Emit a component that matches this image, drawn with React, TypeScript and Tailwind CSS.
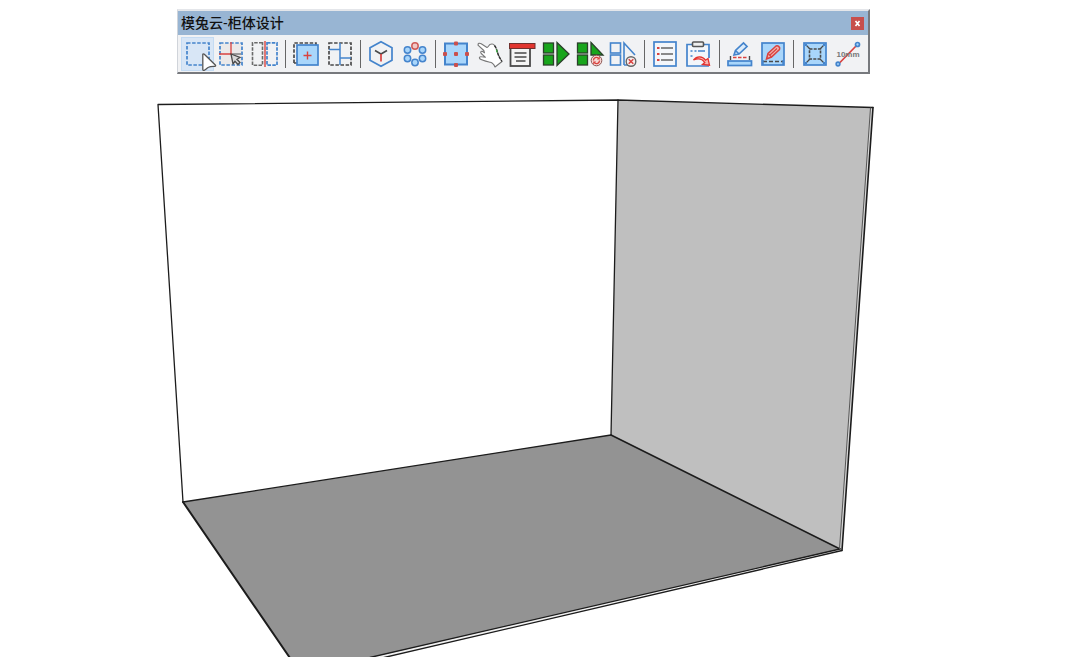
import type { ReactNode } from "react";
import clsx from "clsx";

const BLUE = "#4484cc";
const SKY = "#a9d6fb";
const RED = "#d9423f";
const DARK = "#4a4a4a";
const GREEN = "#18a51c";

type Tool = { label: string; icon: ReactNode; active?: boolean };

const Icon = ({ children }: { children: ReactNode }) => (
  <svg
    viewBox="0 0 24 24"
    className="size-6 overflow-visible"
    fill="none"
    strokeWidth="1.7"
    aria-hidden="true"
  >
    {children}
  </svg>
);

const groups: Tool[][] = [
  [
    {
      label: "选择空间",
      active: true,
      icon: (
        <Icon>
          <rect x="1" y="1" width="22" height="22" stroke={BLUE} strokeDasharray="3.5 1.6" />
        </Icon>
      ),
    },
    {
      label: "拾取分割",
      icon: (
        <Icon>
          <rect x="1" y="1" width="22" height="22" fill="#ebe9e9" stroke={BLUE} strokeDasharray="3.5 1.6" />
          <path d="M12 0v13M0 12h13" stroke={RED} strokeWidth="1.3" />
          <path d="M13 12h9" stroke={DARK} strokeWidth="1" />
          <path d="M12 12l9 3.5-3 1.8 3 3.2-2 2-3-3.2-2 2.7z" fill="#d8d8d8" stroke={DARK} strokeWidth="1.3" />
        </Icon>
      ),
    },
    {
      label: "左右拆分",
      icon: (
        <Icon>
          <path d="M9.5 .8H-.5v22.4h10z" stroke="#6a6a6a" strokeWidth="1.6" strokeDasharray="3.5 1.3" />
          <path d="M14 .8h10v22.4H14z" stroke={BLUE} strokeDasharray="3.5 1.3" />
          <path d="M12-1v26" stroke="#de6a68" strokeWidth="1.8" />
        </Icon>
      ),
    },
  ],
  [
    {
      label: "添加柜体",
      icon: (
        <Icon>
          <path d="M0 21V1h22v3M0 21h3" stroke={DARK} strokeDasharray="3.5 1.6" />
          <rect x="3" y="3" width="21" height="20" fill={SKY} stroke={BLUE} />
          <path d="M13.5 9.5v8M9.5 13.5h8" stroke={RED} strokeWidth="1.4" />
        </Icon>
      ),
    },
    {
      label: "分隔布局",
      icon: (
        <Icon>
          <rect x="1" y="1" width="22" height="22" stroke={DARK} strokeDasharray="3.5 1.6" />
          <path d="M12 1v22M1 7.5h11M12 16h11" stroke={BLUE} strokeWidth="1.5" />
        </Icon>
      ),
    },
  ],
  [
    {
      label: "模型",
      icon: (
        <Icon>
          <path d="M12-.3l11 6v12.6l-11 6-11-6V5.7z" stroke={BLUE} />
          <path d="M6 8.5l6 3.5 6-3.5" stroke={DARK} strokeWidth="1.6" />
          <path d="M12 12v7.5" stroke={RED} />
        </Icon>
      ),
    },
    {
      label: "组件",
      icon: (
        <Icon>
          <g fill={SKY} stroke={BLUE} strokeWidth="1.5">
            <circle cx="4.500" cy="8" r="3.200" />
            <circle cx="19.500" cy="8" r="3.200" />
            <circle cx="4.500" cy="16.500" r="3.200" />
            <circle cx="19.500" cy="16.500" r="3.200" />
            <circle cx="12" cy="20.500" r="3.200" />
          </g>
          <circle cx="12" cy="4" r="3.200" fill="#f0c8c6" stroke="#cf5b58" strokeWidth="1.5" />
        </Icon>
      ),
    },
  ],
  [
    {
      label: "控制点",
      icon: (
        <Icon>
          <rect x="1" y="1.5" width="22" height="21" fill={SKY} stroke={BLUE} strokeWidth="2" />
          <g fill="#c9504e">
            <rect x="10" y="-.5" width="4" height="4" rx="1" />
            <rect x="10" y="21" width="4" height="4" rx="1" />
            <rect x="-1" y="10" width="4" height="4" rx="1" />
            <rect x="21" y="10" width="4" height="4" rx="1" />
            <rect x="10" y="10" width="4" height="4" rx="1" />
          </g>
        </Icon>
      ),
    },
    {
      label: "拖动",
      icon: (
        <Icon>
          <path
            d="M1 3.2C.8 1.2 2.600 .8 4.200 1.800L10 5.500C11.300 5.200 12 2.500 13.500 2.200C15 1.800 17 2.300 17.500 3.500C19.500 6 20 9 21 12C22 15 23.500 17 25 19.500L18 25C17 22.500 15.500 20.800 13.300 20.300C10 19.500 5 18.500 2.800 16.800C1.700 15.500 3 14.500 4.500 14.800L8.500 15.300L4.200 11.500C3 10 4.200 8.800 5.700 9.600L7.500 10.800L6.800 8.500Z"
            fill="#fff"
            stroke="#777"
            strokeWidth="1.1"
            strokeLinejoin="round"
          />
          <path d="M17.500 3.500C19.500 6 20 9 21 12C22 15 23.500 17 25 19.500" stroke="#333" strokeWidth="1.300" strokeDasharray="3 1" />
          <path d="M19.400 7.500l.8 3" stroke="#3cb043" strokeWidth="1.200" />
        </Icon>
      ),
    },
    {
      label: "属性面板",
      icon: (
        <Icon>
          <rect x="-.5" y="4" width="19.500" height="20" fill="#f5f5f5" stroke={DARK} strokeWidth="1.8" />
          <rect x="-1.500" y="1.500" width="25.500" height="5" fill="#e1352f" stroke="#70302e" strokeWidth="1" />
          <path d="M3.500 11h12M3.500 15h12M5 19h9.500" stroke={DARK} strokeWidth="1.3" />
        </Icon>
      ),
    },
    {
      label: "生成",
      icon: (
        <Icon>
          <g fill={GREEN} stroke="#2b402b" strokeWidth="1.3">
            <rect x="-.5" y="1" width="10" height="10" />
            <rect x="-.5" y="13" width="10" height="10" />
            <path d="M13 .5l12 11.500-12 11.500z" />
          </g>
        </Icon>
      ),
    },
    {
      label: "刷新生成",
      icon: (
        <Icon>
          <g fill={GREEN} stroke="#2b402b" strokeWidth="1.3">
            <rect x="-.5" y="1" width="10" height="10" />
            <rect x="-.5" y="13" width="10" height="10" />
            <path d="M13 .5l12 12.500H13z" />
          </g>
          <circle cx="18.500" cy="18.500" r="5.300" fill="#f6d9d6" stroke="#8d5552" strokeWidth="1" />
          <path d="M15.500 18.500a3 3 0 015-2.300M21.500 18.500a3 3 0 01-5 2.300" stroke={RED} strokeWidth="1.300" />
          <path d="M21.800 14.500v3h-3zM15.200 22.500v-3h3z" fill={RED} />
        </Icon>
      ),
    },
    {
      label: "取消生成",
      icon: (
        <Icon>
          <g stroke={BLUE} strokeWidth="1.6">
            <rect x="-.5" y="1" width="10" height="10" />
            <rect x="-.5" y="13" width="10" height="10" />
            <path d="M13 23V1l11 12M13 23h4" />
          </g>
          <circle cx="20" cy="19.500" r="4.800" fill="#f7f0ef" stroke="#666" strokeWidth="1.4" />
          <path d="M17.700 17.200l4.600 4.600M22.300 17.200l-4.600 4.600" stroke={RED} strokeWidth="1.5" />
        </Icon>
      ),
    },
  ],
  [
    {
      label: "列表",
      icon: (
        <Icon>
          <rect x="1" y="0" width="22" height="24" fill="#f3f6fa" stroke={BLUE} />
          <path d="M8 6h12M8 12h12M8 18h12" stroke="#666" strokeWidth="1.5" />
          <path d="M4 6h2.500M4 12h2.500M4 18h2.500" stroke={RED} strokeWidth="2.2" />
        </Icon>
      ),
    },
    {
      label: "导出清单",
      icon: (
        <Icon>
          <path d="M23 16V2.500H1V24h22" fill="#f3f6fa" stroke={BLUE} />
          <rect x="6.500" y="0" width="11" height="4.500" rx="1" fill="#eee" stroke="#555" strokeWidth="1.6" />
          <path d="M4.500 9h2M8.500 9h2M12 9h7M4.500 14h2" stroke={BLUE} strokeWidth="1.6" />
          <path
            d="M7.500 18c3.500-4.500 9-4 12 .2l2.500-1.700 1.500 6.700-7-.7 2.300-1.900c-2.300-3.600-6.800-4.600-11.300-2.600z"
            fill="#f6b4b0"
            stroke="#e5322d"
            strokeWidth="1.3"
          />
        </Icon>
      ),
    },
  ],
  [
    {
      label: "标注",
      icon: (
        <Icon>
          <path d="M6 13l1.500-4.500L15.500 1 19 4.500l-8 7.500zM7.500 8.500L11 12" fill="#dcecfb" stroke={BLUE} />
          <path d="M2.500 14v4M21.500 14v4" stroke={DARK} strokeWidth="1.4" />
          <path d="M5 15.500h15" stroke={RED} strokeWidth="1.3" strokeDasharray="3.5 1.5" />
          <rect x="0" y="19" width="23.500" height="4.500" fill={SKY} stroke={BLUE} strokeWidth="1.7" />
        </Icon>
      ),
    },
    {
      label: "编辑",
      icon: (
        <Icon>
          <rect x="1" y="1" width="22" height="22" fill={SKY} stroke={BLUE} />
          <path d="M2 19.500h20" stroke={DARK} strokeWidth="1.5" strokeDasharray="4 2" />
          <path d="M2 23v-5M22 23v-5" stroke={BLUE} strokeWidth="1.4" />
          <path d="M5.500 17l1.500-5.500L15 4c2-1 4.500 1.500 3.500 3.500L10.500 15z" fill="#f2b3ae" stroke={RED} strokeWidth="1.5" />
          <path d="M7.500 12l3 3M8.500 13.500l7.500-7" stroke={RED} strokeWidth="1.2" />
        </Icon>
      ),
    },
  ],
  [
    {
      label: "内空",
      icon: (
        <Icon>
          <rect x="1" y="1" width="22" height="22" fill={SKY} stroke={BLUE} />
          <rect x="6.500" y="7" width="11" height="10" stroke={DARK} strokeWidth="1.6" strokeDasharray="3 1.2" />
          <path d="M2.500 2.500L7 7M21.500 2.500L17 7M2.500 21.500L7 17M21.500 21.500L17 17" stroke={DARK} strokeWidth="1.2" />
          <path d="M2 2h2v2H2zM20 2h2v2h-2zM2 20h2v2H2zM20 20h2v2h-2z" fill={BLUE} />
        </Icon>
      ),
    },
    {
      label: "测量距离",
      icon: (
        <Icon>
          <path d="M2.500 22L21.500 2.500" stroke={RED} />
          <circle cx="2" cy="22" r="1.800" fill={SKY} stroke={BLUE} />
          <circle cx="21.500" cy="2.500" r="2" fill={SKY} stroke={BLUE} />
          <text
            x="12"
            y="15"
            textAnchor="middle"
            className="font-['Liberation_Sans'] text-[8px] font-bold"
            fill="#777"
          >
            10mm
          </text>
        </Icon>
      ),
    },
  ],
];

const Pointer = () => (
  <svg
    viewBox="0 0 15 18"
    className="pointer-events-none absolute top-4 left-5 z-10 h-[18px] w-[15px] overflow-visible"
    aria-hidden="true"
  >
    <path
      d="M1.800 1.200c.3-.5 1-.5 1.500 0L14.300 12c.6.7.3 1.300-.6 1.400-2.700-.1-4.700 0-6.200.9-1.500.8-2.500 1.800-4 2.900-.9.500-1.800.2-1.700-.8z"
      fill="#fff"
      stroke="#555"
      strokeWidth="1.3"
    />
  </svg>
);

const ToolButton = ({ label, icon, active }: Tool) => (
  <button
    type="button"
    aria-label={label}
    aria-pressed={!!active}
    className={clsx(
      "relative flex h-[34px] flex-1 items-center justify-center",
      active && "bg-[#d8e6f6] outline-1 -outline-offset-1 outline-[#c4dbf3]"
    )}
  >
    {icon}
    {active && <Pointer />}
  </button>
);

const Toolbar = () => (
  <header className="mt-[9px] mr-[209px] ml-[177px] border-t-2 border-r-2 border-b-2 border-l border-t-[#e4e6ea] border-r-[#77797d] border-b-[#77797d] border-l-[#d0d4da] bg-[#f1f2f4]">
    <div className="flex h-6 items-center justify-between bg-[#98b5d3] pr-1 pl-[3px]">
      <h1 className="font-['Liberation_Sans','Noto_Sans_CJK_SC',sans-serif] text-[14px] leading-6 font-medium whitespace-nowrap text-[#111]">
        模兔云-柜体设计
      </h1>
      <button
        type="button"
        aria-label="关闭"
        className="flex size-[13px] items-center justify-center bg-[#c74f4c]"
      >
        <svg viewBox="0 0 7 7" className="size-[7px]" aria-hidden="true">
          <path d="M1.500 1l4 5M5.500 1l-4 5" stroke="#fff" strokeWidth="1.700" />
        </svg>
      </button>
    </div>
    <div className="flex h-[37px] items-center px-[3px]">
      {groups.map((tools, i) => (
        <div key={i} className="contents">
          {i > 0 && (
            <div className="flex w-2 justify-center">
              <span className="h-7 w-px bg-[#666]" />
            </div>
          )}
          {tools.map((tool) => (
            <ToolButton key={tool.label} {...tool} />
          ))}
        </div>
      ))}
    </div>
  </header>
);

// back wall stays open, only the right wall and the floor are shaded
const Room = () => (
  <svg
    viewBox="0 74 1079 584"
    className="block w-full"
    strokeLinejoin="round"
    strokeLinecap="round"
    role="img"
    aria-label="房间"
  >
    <path d="M618 100L873 107.500 842 550.500 611 435z" fill="#bfbfbf" />
    <path d="M870.500 108l2.500-.5-31 443-2.500-1.500z" fill="#d8d8d8" />
    <path d="M183 502L611 435l229 114-470 109H290z" fill="#939393" />
    <path d="M840 549l2 1.500L384 658h-14z" fill="#f1f1f1" />
    <g fill="none" stroke="#1c1c1c" strokeWidth="1.3">
      <path d="M183 502L158 104.500 618 100l255 7.500" />
      <path d="M618 100l-7 335" />
      <path d="M183 502l428-67" />
      <path d="M611 435l229 114" strokeWidth="1.6" />
      <path d="M183 502l107 156" strokeWidth="2" />
      <path d="M840 549L370 657.500" />
      <path d="M842 550.500L380 658.500" />
      <path d="M870.500 108l-31 441" stroke="#555" strokeWidth="1" />
      <path d="M873 107.500l-31 443" strokeWidth="1.6" />
    </g>
  </svg>
);

export default function App() {
  return (
    <div className="flow-root min-h-screen overflow-hidden bg-white">
      <Toolbar />
      <main>
        <Room />
      </main>
    </div>
  );
}
